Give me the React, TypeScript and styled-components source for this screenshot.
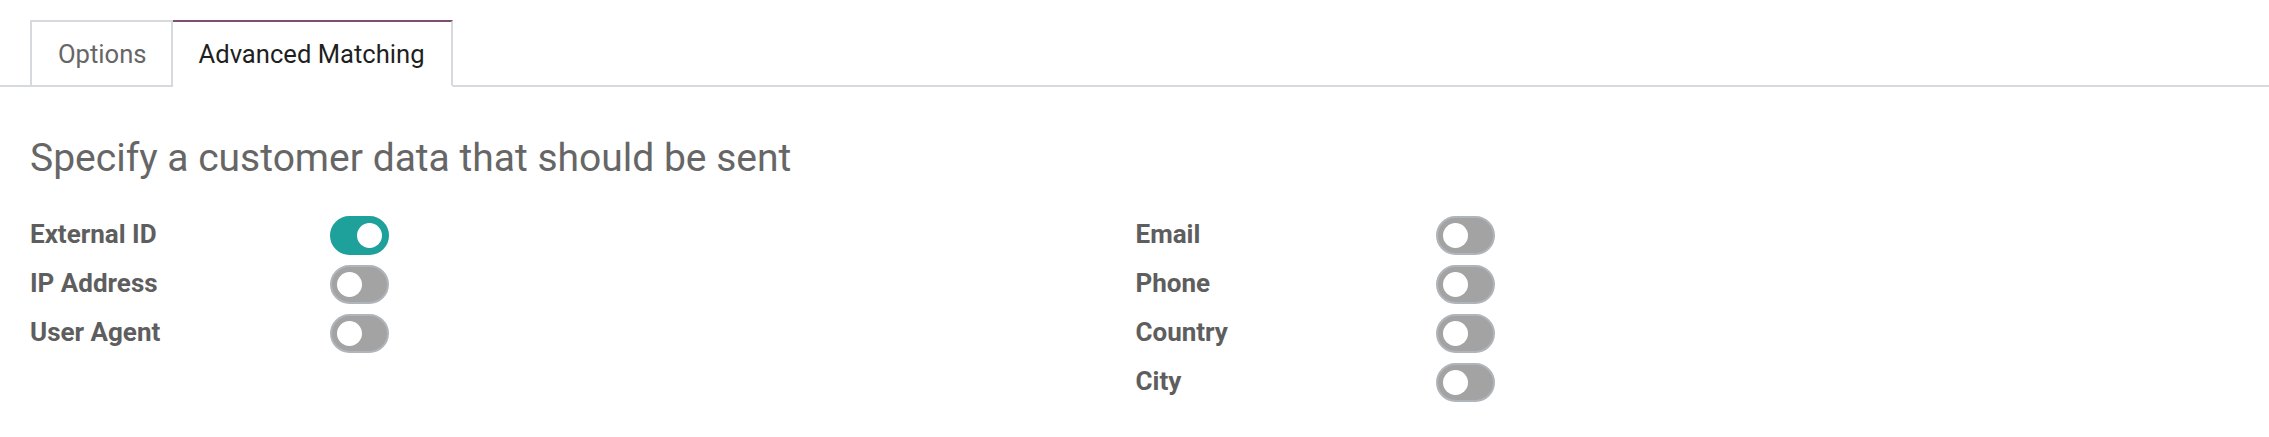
import React, { FC, useState } from 'react';
import styled, { createGlobalStyle } from 'styled-components';

const GlobalStyle = createGlobalStyle`
  html, body {
    margin: 0;
    padding: 0;
    background: #ffffff;
  }
  body {
    font-family: Roboto, "Noto Sans", "Liberation Sans", sans-serif;
  }
`;

const Page = styled.div`
  width: 2269px;
  padding-top: 20px;
  box-sizing: border-box;
`;

const TabBar = styled.div`
  display: flex;
  padding-left: 30px;
  border-bottom: 2px solid #d6dadf;
`;

const Tab = styled.div<{ active?: boolean }>`
  box-sizing: border-box;
  height: 67px;
  margin-bottom: -2px;
  padding: 0 ${p => (p.active ? '26px' : '24px')} 0 26px;
  display: flex;
  align-items: center;
  font-size: 25.6px;
  color: ${p => (p.active ? '#1f1f1f' : '#666666')};
  background: #ffffff;
  border: 2px solid #d6dadf;
  border-top-color: ${p => (p.active ? '#7c4f72' : '#d6dadf')};
  border-bottom-color: ${p => (p.active ? '#ffffff' : '#d6dadf')};
  & + & {
    border-left: none;
  }
  cursor: pointer;
`;

const Content = styled.div`
  padding: 47px 28px 0 30px;
`;

const Heading = styled.h2`
  margin: 0 0 29px;
  font-size: 39px;
  font-weight: 400;
  line-height: 48px;
  color: #666666;
`;

const Columns = styled.div`
  display: grid;
  grid-template-columns: 1fr 1fr;
`;

const Column = styled.div`
  display: flex;
  flex-direction: column;
`;

const Row = styled.div`
  display: flex;
  align-items: center;
  height: 49px;
`;

const Label = styled.label`
  width: 300px;
  font-size: 26px;
  font-weight: 700;
  color: #5e5e5e;
  line-height: 37px;
  padding-bottom: 2px;
`;

const Switch = styled.button<{ on: boolean }>`
  position: relative;
  box-sizing: border-box;
  width: 59px;
  height: 39px;
  padding: 0;
  border-radius: 20px;
  border: 2px solid ${p => (p.on ? '#1fa19b' : '#b0b5bb')};
  background: ${p => (p.on ? '#1fa19b' : '#a3a3a3')};
  cursor: pointer;
`;

const Knob = styled.span<{ on: boolean }>`
  position: absolute;
  top: 5px;
  left: ${p => (p.on ? '25px' : '5px')};
  width: 25px;
  height: 25px;
  border-radius: 50%;
  background: #ffffff;
`;

type Field = { id: string; title: string };

const leftFields: Field[] = [
  { id: 'external_id', title: 'External ID' },
  { id: 'ip', title: 'IP Address' },
  { id: 'user_agent', title: 'User Agent' },
];

const rightFields: Field[] = [
  { id: 'email', title: 'Email' },
  { id: 'phone', title: 'Phone' },
  { id: 'country', title: 'Country' },
  { id: 'city', title: 'City' },
];

const FieldList: FC<{
  fields: Field[];
  values: Record<string, boolean>;
  onToggle: (id: string) => void;
}> = ({ fields, values, onToggle }) => (
  <Column>
    {fields.map(f => (
      <Row key={f.id}>
        <Label>{f.title}</Label>
        <Switch on={!!values[f.id]} onClick={() => onToggle(f.id)}>
          <Knob on={!!values[f.id]} />
        </Switch>
      </Row>
    ))}
  </Column>
);

const App: FC = () => {
  const [tab, setTab] = useState('advanced');
  const [values, setValues] = useState<Record<string, boolean>>({
    external_id: true,
  });
  const toggle = (id: string) => setValues({ ...values, [id]: !values[id] });

  return (
    <Page>
      <GlobalStyle />
      <TabBar>
        <Tab active={tab === 'options'} onClick={() => setTab('options')}>
          Options
        </Tab>
        <Tab active={tab === 'advanced'} onClick={() => setTab('advanced')}>
          Advanced Matching
        </Tab>
      </TabBar>
      <Content>
        <Heading>Specify a customer data that should be sent</Heading>
        <Columns>
          <FieldList fields={leftFields} values={values} onToggle={toggle} />
          <FieldList fields={rightFields} values={values} onToggle={toggle} />
        </Columns>
      </Content>
    </Page>
  );
};

export default App;
